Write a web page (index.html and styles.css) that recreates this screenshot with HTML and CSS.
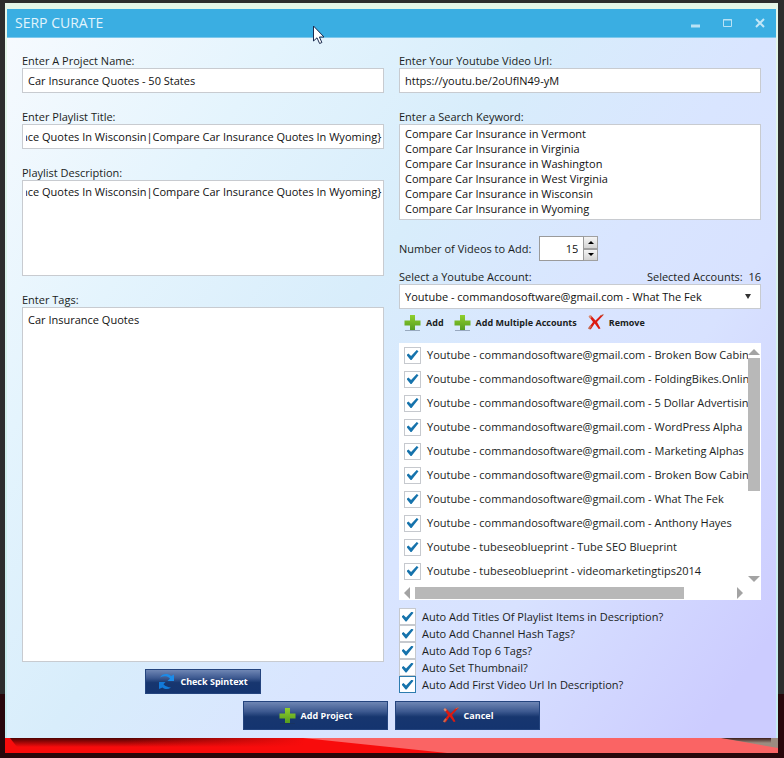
FILE: index.html
```
<!DOCTYPE html>
<html lang="en">
<head>
<meta charset="utf-8">
<title>SERP CURATE</title>
<link rel="stylesheet" href="styles.css">
</head>
<body>
<svg class="defs" aria-hidden="true">
  <defs>
    <linearGradient id="green" x1="0" y1="0" x2="0" y2="1"><stop offset="0" stop-color="#8fd02c"/><stop offset="1" stop-color="#559c20"/></linearGradient>
    <symbol id="plus" viewBox="0 0 17 17"><path d="M1 16.500h15" stroke="#20304a" stroke-opacity=".35"/><path d="M6 1h5v5.500h5.500v5H11V16H6v-4.500H.5v-5H6z" fill="url(#green)"/></symbol>
    <symbol id="cross" viewBox="0 0 17 17"><path d="M2 2.500l2-1 4.500 5L14 1l2.500 0-6.500 7 3.500 6.500-1.800.5-4-5.500-4 6L1.500 14 6 8z" fill="#dc1a10"/><path d="M1.500 2.500L3 1l2 2-2 1.500z" fill="#d98a70"/><path d="M1.800 15l2.200-3.200" stroke="#c56a50" stroke-width="2"/><path d="M13.500 1.800L16.500.5" stroke="#b86a50"/></symbol>
    <symbol id="refresh" viewBox="0 0 17 17"><path d="M2 4.500C4 .5 10 0 13 3l3-1.500V8H9.500L12 5.500C9 2.500 5 3 2 4.500z" fill="#1c8be8"/><path d="M13 14.500c-3 2-6 2-8.500 0L1 16V9h6.500l-2 2.300c2 2.200 4.500 3 7.500 3.200z" fill="#1279d8"/></symbol>
  </defs>
</svg>
<div class="desktop">
<main class="window">
  <header class="titlebar">
    <h1>SERP CURATE</h1>
    <button aria-label="Minimize"><svg width="10" height="10"><path d="M0 8h9" stroke="#b9e2f5" stroke-width="3"/></svg></button>
    <button aria-label="Maximize"><svg width="10" height="10"><path d="M.5 1.500h8v7h-8zM0 2h9" fill="none" stroke="#b9e2f5"/></svg></button>
    <button aria-label="Close"><svg width="10" height="10"><path d="M1 1l8 8M9 1L1 9" stroke="#c3e7f7" stroke-width="2"/></svg></button>
    <svg class="cursor" width="14" height="20" viewBox="0 0 14 20"><path d="M1.500 1v15l3.500-3.200 2.600 5.700 2.300-1-2.500-5.500H12z" fill="#fff" stroke="#1b2c50"/></svg>
  </header>
  <form class="content">
    <div class="columns">
      <div class="column">
        <div class="field"><label for="name">Enter A Project Name:</label><input id="name" type="text" value="Car Insurance Quotes - 50 States"></div>
        <div class="field"><label for="ptitle">Enter Playlist Title:</label><input id="ptitle" class="scrolled" type="text" value="nce Quotes In Wisconsin|Compare Car Insurance Quotes In Wyoming}"></div>
        <div class="field"><label for="desc">Playlist Description:</label><textarea id="desc" class="medium scrolled">nce Quotes In Wisconsin|Compare Car Insurance Quotes In Wyoming}</textarea></div>
        <div class="field grow"><label for="tags">Enter Tags:</label><textarea id="tags">Car Insurance Quotes</textarea></div>
        <button type="button" class="blue small"><svg class="icon"><use href="#refresh"/></svg>Check Spintext</button>
      </div>
      <div class="column">
        <div class="field"><label for="url">Enter Your Youtube Video Url:</label><input id="url" type="text" value="https://youtu.be/2oUflN49-yM"></div>
        <div class="field"><label for="keyword">Enter a Search Keyword:</label><textarea id="keyword" class="medium keywords">Compare Car Insurance in Vermont
Compare Car Insurance in Virginia
Compare Car Insurance in Washington
Compare Car Insurance in West Virginia
Compare Car Insurance in Wisconsin
Compare Car Insurance in Wyoming</textarea></div>
        <div class="count">
          <label for="count">Number of Videos to Add:</label>
          <span class="spinner"><input id="count" type="text" value="15"><span class="steps"><button type="button" aria-label="More"><svg width="6" height="3"><path d="M0 3l3-3 3 3z"/></svg></button><button type="button" aria-label="Fewer"><svg width="6" height="3"><path d="M0 0l3 3 3-3z"/></svg></button></span></span>
        </div>
        <div class="accounts-label"><label for="account">Select a Youtube Account:</label><span>Selected Accounts:&nbsp; 16</span></div>
        <div class="select"><select id="account"><option>Youtube - commandosoftware@gmail.com - What The Fek</option></select><svg width="6" height="5"><path d="M0 0h6L3 5z"/></svg></div>
        <div class="tools">
          <button type="button"><svg class="icon"><use href="#plus"/></svg>Add</button>
          <button type="button"><svg class="icon"><use href="#plus"/></svg>Add Multiple Accounts</button>
          <button type="button"><svg class="icon"><use href="#cross"/></svg>Remove</button>
        </div>
        <div class="list">
          <div class="rows">
            <label><input type="checkbox" checked>Youtube - commandosoftware@gmail.com - Broken Bow Cabins</label>
            <label><input type="checkbox" checked>Youtube - commandosoftware@gmail.com - FoldingBikes.Online</label>
            <label><input type="checkbox" checked>Youtube - commandosoftware@gmail.com - 5 Dollar Advertising</label>
            <label><input type="checkbox" checked>Youtube - commandosoftware@gmail.com - WordPress Alpha</label>
            <label><input type="checkbox" checked>Youtube - commandosoftware@gmail.com - Marketing Alphas</label>
            <label><input type="checkbox" checked>Youtube - commandosoftware@gmail.com - Broken Bow Cabins</label>
            <label><input type="checkbox" checked>Youtube - commandosoftware@gmail.com - What The Fek</label>
            <label><input type="checkbox" checked>Youtube - commandosoftware@gmail.com - Anthony Hayes</label>
            <label><input type="checkbox" checked>Youtube - tubeseoblueprint - Tube SEO Blueprint</label>
            <label><input type="checkbox" checked>Youtube - tubeseoblueprint - videomarketingtips2014</label>
          </div>
          <div class="vbar"><svg width="12" height="7"><path d="M0 7l6-6 6 6z"/></svg><div class="track"><div class="thumb"></div></div><svg width="12" height="7"><path d="M0 0l6 6 6-6z"/></svg></div>
          <div class="hbar"><svg width="6" height="12"><path d="M6 0L0 6l6 6z"/></svg><div class="track"><div class="thumb"></div></div><svg width="6" height="12"><path d="M0 0l6 6-6 6z"/></svg></div>
        </div>
        <div class="options">
          <label><input type="checkbox" checked>Auto Add Titles Of Playlist Items in Description?</label>
          <label><input type="checkbox" checked>Auto Add Channel Hash Tags?</label>
          <label><input type="checkbox" checked>Auto Add Top 6 Tags?</label>
          <label><input type="checkbox" checked>Auto Set Thumbnail?</label>
          <label><input type="checkbox" class="active" checked>Auto Add First Video Url In Description?</label>
        </div>
      </div>
    </div>
    <div class="actions">
      <button type="button" class="blue"><svg class="icon"><use href="#plus"/></svg>Add Project</button>
      <button type="button" class="blue"><svg class="icon"><use href="#cross"/></svg>Cancel</button>
    </div>
  </form>
</main>
<svg class="ground" viewBox="0 0 773 15" preserveAspectRatio="none" aria-hidden="true">
  <defs><linearGradient id="shade" x1="0" y1="0" x2="0" y2="1"><stop offset="0" stop-color="#200" stop-opacity=".8"/><stop offset="1" stop-color="#200" stop-opacity="0"/></linearGradient>
  <linearGradient id="fade" x1="0" y1="0" x2="1" y2="0"><stop offset="0" stop-color="#f80c0c" stop-opacity="0"/><stop offset="1" stop-color="#f80c0c"/></linearGradient></defs>
  <path d="M0 0h773v15H0z" fill="#f80c0c"/>
  <path d="M5 0h295v9H12z" fill="url(#shade)"/>
  <path d="M120 0h180v9H120z" fill="url(#fade)"/>
  <path d="M298 0h420l55 9v6H442z" fill="#fa6464"/>
  <path d="M716 0h57v10z" fill="#9c8c80"/>
  <path d="M716 0h50v5h-20z" fill="url(#shade)"/>
</svg>
</div>
</body>
</html>
```

FILE: styles.css
```
* { box-sizing: border-box; }

body {
  margin: 0;
  background: linear-gradient(#2d2d2d 694px, #28070b 694px);
  color: #1a1d22;
  font: 11px/14px "Open Sans", "Noto Sans", sans-serif;
}

.defs { position: absolute; width: 0; height: 0; }

.desktop {
  min-height: 100vh;
  padding: 3px 6px 5px 5px;
}

.window {
  padding: 6px 2px 0;
  background: linear-gradient(#e6f6e8, #c4ebef);
}

.titlebar {
  position: relative;
  display: flex;
  align-items: center;
  height: 29px;
  padding: 0 11px 0 8px;
  gap: 22px;
  background: #3aaee2;
  border-bottom: 1px solid #7cc8ec;
}

h1 {
  flex: 1;
  margin: 0;
  color: #e2f4fc;
  font-size: 14px;
  font-weight: 400;
}

button {
  padding: 0;
  border: 0;
  background: none;
  color: inherit;
  font: inherit;
}

.titlebar button { display: flex; }

.cursor { position: absolute; left: 305px; top: 16px; }

.content {
  padding: 16px 15px 8px;
  background: linear-gradient(125deg, #f6fafe 0%, #e4f4fd 22%, #d8edfb 42%, #d9e5ff 60%, #d8e2ff 72%, #ccccff 94%);
}

.columns {
  display: grid;
  grid-template-columns: minmax(0, 1fr) minmax(0, 1fr);
  gap: 15px;
}

.column { display: flex; flex-direction: column; }

.field {
  display: flex;
  flex-direction: column;
  margin-bottom: 17px;
}

.field.grow { flex: 1; margin-bottom: 7px; }
.field.grow textarea { flex: 1; }

input[type="text"], textarea, select {
  width: 100%;
  height: 25px;
  margin: 0;
  padding: 0 5px;
  border: 1px solid #c8cbd0;
  border-radius: 0;
  background: #fff;
  color: #111;
  font: inherit;
}

textarea {
  display: block;
  padding: 4px 5px;
  line-height: 15px;
  resize: none;
  overflow: hidden;
}

textarea.medium { height: 96px; }
textarea.keywords { padding: 1px 5px; }

input[type="text"].scrolled {
  padding: 0 0 0 3px;
  text-indent: -5px;
}

textarea.scrolled {
  padding: 3px 0;
  border-width: 1px 1px 1px 4px;
  border-color: #fff;
  outline: 1px solid #c8cbd0;
  outline-offset: -1px;
  text-indent: -5px;
  white-space: pre;
}

.count {
  display: flex;
  align-items: center;
  gap: 8px;
  margin: -1px 0 9px;
}

.spinner { display: flex; width: 59px; }
.spinner input { flex: 1; min-width: 0; text-align: right; border-color: #9a9a9a; }
.steps { display: flex; flex-direction: column; width: 14px; }

.steps button {
  flex: 1;
  display: flex;
  align-items: center;
  justify-content: center;
  border: 1px solid #a0a0a0;
  border-left: 0;
  background: linear-gradient(#f4f4f4, #d4d4d4);
}

.accounts-label { display: flex; justify-content: space-between; }

.select { position: relative; }
.select select { display: block; appearance: none; }
.select svg { position: absolute; right: 10px; top: 10px; fill: #333; }

.tools {
  display: flex;
  gap: 10px;
  height: 34px;
  padding: 5px 5px 0;
  align-items: flex-start;
}

.tools button, .blue {
  display: flex;
  align-items: center;
  gap: 5px;
  font-size: 9px;
  font-weight: 700;
}

.icon { width: 17px; height: 17px; }

.list {
  display: grid;
  grid-template-columns: minmax(0, 1fr) 13px;
  height: 257px;
  padding: 0 0 1px;
  background: #fff;
}

.rows {
  overflow: hidden;
  padding: 0 0 0 5px;
}

.rows label {
  display: flex;
  align-items: center;
  gap: 6px;
  height: 24px;
  white-space: nowrap;
}

input[type="checkbox"] {
  appearance: none;
  flex: none;
  width: 17px;
  height: 17px;
  margin: 0;
  border: 1px solid #c6c9ce;
  background: #fff;
  display: grid;
  place-content: center;
}

input[type="checkbox"]:checked::before {
  content: "";
  width: 12px;
  height: 10px;
  background: #1673ac;
  clip-path: polygon(0 50%, 16% 35%, 38% 60%, 85% 0, 100% 12%, 42% 100%, 34% 100%);
}

input[type="checkbox"].active { border-color: #2d7cae; }

.vbar, .hbar { display: flex; fill: #a3a3a3; }
.vbar { flex-direction: column; height: 240px; padding: 5px 1px 0 0; gap: 3px; }
.hbar { grid-column: 1 / -1; align-self: end; height: 12px; padding: 0 18px 0 5px; gap: 5px; }
.vbar svg, .hbar svg { flex: none; }
.track { flex: 1; }
.thumb { background: #b8b8b8; }
.vbar .thumb { width: 12px; height: 62%; }
.hbar .thumb { width: 85%; height: 12px; }

.options { padding: 8px 0 1px; }

.options label {
  display: flex;
  align-items: center;
  gap: 6px;
}

.blue {
  align-self: center;
  justify-content: center;
  width: 145px;
  height: 29px;
  border: 1px solid #24447e;
  background: linear-gradient(#6f86b4, #3d5990 35%, #17366f 55%, #14346f);
  color: #fff;
}

.blue.small { width: 116px; height: 25px; }

.actions {
  display: flex;
  justify-content: center;
  gap: 7px;
  margin-top: 7px;
}

.ground { display: block; width: 100%; height: 15px; }
```
